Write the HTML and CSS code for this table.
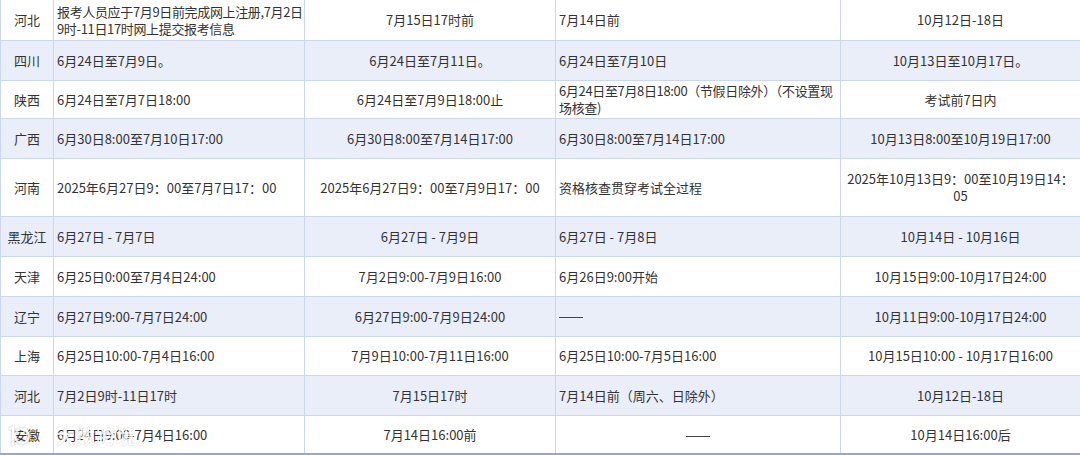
FILE: index.html
```html
<!DOCTYPE html>
<html lang="zh-CN">
<head>
<meta charset="utf-8">
<link rel="stylesheet" href="styles.css">
</head>
<body>
<div class="wrap">
<table class="grid">
  <colgroup>
    <col class="c1"><col class="c2"><col class="c3"><col class="c4"><col class="c5">
  </colgroup>
  <tbody>
    <tr class="r-first">
      <td class="prov">河北</td>
      <td class="left tight">报考人员应于7月9日前完成网上注册,7月2日<br>9时-11日17时网上提交报考信息</td>
      <td class="mid">7月15日17时前</td>
      <td class="left">7月14日前</td>
      <td class="mid">10月12日-18日</td>
    </tr>
    <tr class="alt">
      <td class="prov">四川</td>
      <td class="left">6月24日至7月9日。</td>
      <td class="mid">6月24日至7月11日。</td>
      <td class="left">6月24日至7月10日</td>
      <td class="mid">10月13日至10月17日。</td>
    </tr>
    <tr class="r-short">
      <td class="prov">陕西</td>
      <td class="left">6月24日至7月7日18:00</td>
      <td class="mid">6月24日至7月9日18:00止</td>
      <td class="left tight">6月24日至7月8日18:00（节假日除外）（不设置现<br>场核查)</td>
      <td class="mid">考试前7日内</td>
    </tr>
    <tr class="alt">
      <td class="prov">广西</td>
      <td class="left">6月30日8:00至7月10日17:00</td>
      <td class="mid">6月30日8:00至7月14日17:00</td>
      <td class="left">6月30日8:00至7月14日17:00</td>
      <td class="mid">10月13日8:00至10月19日17:00</td>
    </tr>
    <tr class="r-tall">
      <td class="prov">河南</td>
      <td class="left">2025年6月27日9：00至7月7日17：00</td>
      <td class="mid">2025年6月27日9：00至7月9日17：00</td>
      <td class="left">资格核查贯穿考试全过程</td>
      <td class="mid">2025年10月13日9：00至10月19日14：<br>05</td>
    </tr>
    <tr class="alt">
      <td class="prov">黑龙江</td>
      <td class="left">6月27日 - 7月7日</td>
      <td class="mid">6月27日 - 7月9日</td>
      <td class="left">6月27日 - 7月8日</td>
      <td class="mid">10月14日 - 10月16日</td>
    </tr>
    <tr class="r-wide">
      <td class="prov">天津</td>
      <td class="left">6月25日0:00至7月4日24:00</td>
      <td class="mid">7月2日9:00-7月9日16:00</td>
      <td class="left">6月26日9:00开始</td>
      <td class="mid">10月15日9:00-10月17日24:00</td>
    </tr>
    <tr class="alt">
      <td class="prov">辽宁</td>
      <td class="left">6月27日9:00-7月7日24:00</td>
      <td class="mid">6月27日9:00-7月9日24:00</td>
      <td class="left"><span class="dash"></span></td>
      <td class="mid">10月11日9:00-10月17日24:00</td>
    </tr>
    <tr class="r-std">
      <td class="prov">上海</td>
      <td class="left">6月25日10:00-7月4日16:00</td>
      <td class="mid">7月9日10:00-7月11日16:00</td>
      <td class="left">6月25日10:00-7月5日16:00</td>
      <td class="mid">10月15日10:00 - 10月17日16:00</td>
    </tr>
    <tr class="alt">
      <td class="prov">河北</td>
      <td class="left">7月2日9时-11日17时</td>
      <td class="mid">7月15日17时</td>
      <td class="left">7月14日前（周六、日除外）</td>
      <td class="mid">10月12日-18日</td>
    </tr>
    <tr class="r-std">
      <td class="prov">安徽</td>
      <td class="left">6月24日9:00-7月4日16:00</td>
      <td class="mid">7月14日16:00前</td>
      <td class="mid"><span class="dash"></span></td>
      <td class="mid">10月14日16:00后</td>
    </tr>
  </tbody>
</table>
<div class="watermark">
  <svg class="wm-logo" width="26" height="26" viewBox="0 0 26 26">
    <path d="M4 6 L7 4 L7 22" fill="none" stroke="#fff" stroke-width="2.2" stroke-linecap="round"/>
    <circle cx="16" cy="13" r="7" fill="none" stroke="#fff" stroke-width="2.2"/>
    <circle cx="19" cy="7" r="2.2" fill="#fff"/>
  </svg>
  <span class="wm-text">大数跨境</span>
</div>
</div>
</body>
</html>
```

FILE: styles.css
```css
html, body {
  margin: 0;
  padding: 0;
  background: #ffffff;
}

.wrap {
  position: relative;
  width: 1080px;
  height: 455px;
  overflow: hidden;
}

.grid {
  border-collapse: collapse;
  table-layout: fixed;
  width: 1080px;
  font-family: "Noto Sans CJK SC", "Microsoft YaHei", sans-serif;
  font-size: 13px;
  line-height: 17px;
  color: #333333;
  border-left: 1px solid #9fb4de;
  border-right: 1px solid #9fb4de;
  border-bottom: 2px solid #8ea8db;
}

.c1 { width: 53px; }
.c2 { width: 251px; }
.c3 { width: 251px; }
.c4 { width: 285px; }
.c5 { width: 240px; }

.grid td {
  border: 1px solid #ccd7ee;
  padding: 0 3px;
  vertical-align: middle;
  white-space: nowrap;
  overflow: hidden;
}

.grid tr:first-child td {
  border-top: none;
}

.grid td.prov { text-align: center; padding: 0; }
.grid td.left { text-align: left; }
.grid td.mid { text-align: center; }
.grid td.tight { letter-spacing: -0.35px; }

.dash {
  display: inline-block;
  width: 24px;
  height: 1px;
  background: #444444;
  vertical-align: middle;
}

.r-first { height: 40px; }
.r-std { height: 39px; }
.r-wide { height: 40px; }
.r-short { height: 38px; }
.alt { height: 40px; background: #e9eef9; }
.r-tall { height: 58px; }

.watermark {
  position: absolute;
  left: 6px;
  bottom: 6px;
  display: flex;
  align-items: center;
  gap: 24px;
  opacity: 0.8;
  pointer-events: none;
}

.wm-logo {
  filter: drop-shadow(0 0 1px rgba(0,0,0,0.4));
}

.wm-text {
  font-family: "Noto Sans CJK SC", sans-serif;
  font-size: 19px;
  font-weight: 700;
  color: #ffffff;
  letter-spacing: 1px;
  text-shadow: 0 0 1px rgba(0,0,0,0.45);
}
```
